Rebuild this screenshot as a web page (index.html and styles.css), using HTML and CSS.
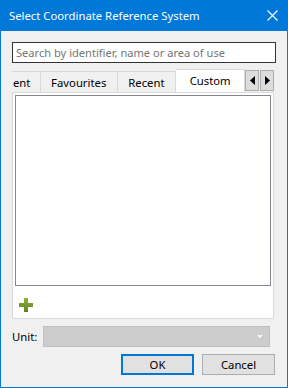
FILE: index.html
```html
<!DOCTYPE html>
<html>
<head>
<meta charset="utf-8">
<link rel="stylesheet" href="styles.css">
</head>
<body>
<div class="window">
  <div class="titlebar">
    <span class="title">Select Coordinate Reference System</span>
    <svg class="close" width="11" height="11" viewBox="0 0 11 11"><path d="M0.5 0.5L10.5 10.5M10.5 0.5L0.5 10.5" stroke="#fff" stroke-width="1.1" fill="none"/></svg>
  </div>
  <div class="content">
    <div class="search"><span class="placeholder">Search by identifier, name or area of use</span></div>
    <div class="tabwidget">
      <div class="tabbar">
        <div class="tab cut"><span>ent</span></div>
        <div class="tab fav">Favourites</div>
        <div class="tab recent">Recent</div>
        <div class="tab active">Custom</div>
        <div class="scrollers">
          <div class="scroll"><svg width="5" height="9" viewBox="0 0 5 9"><path d="M5 0L0 4.5L5 9Z" fill="#000"/></svg></div>
          <div class="scroll"><svg width="5" height="9" viewBox="0 0 5 9"><path d="M0 0L5 4.5L0 9Z" fill="#000"/></svg></div>
        </div>
      </div>
      <div class="pane">
        <div class="list"></div>
        <div class="addrow">
          <svg width="14" height="14" viewBox="0 0 14 14">
            <defs><linearGradient id="g" x1="0" y1="0" x2="0" y2="1"><stop offset="0" stop-color="#93b43f"/><stop offset="1" stop-color="#5d7e1b"/></linearGradient></defs>
            <path d="M5 0H9V5H14V9H9V14H5V9H0V5H5Z" fill="url(#g)"/>
          </svg>
        </div>
      </div>
    </div>
    <div class="unitrow">
      <span class="label">Unit:</span>
      <div class="combo"><svg class="arrow" width="7" height="4" viewBox="0 0 7 4"><path d="M0 0H7L3.5 4Z" fill="#f4f4f4"/><path d="M3.5 4L7 0" stroke="#a8a8a8" stroke-width="0.8"/></svg></div>
    </div>
    <div class="buttons">
      <div class="btn ok">OK</div>
      <div class="btn">Cancel</div>
    </div>
  </div>
</div>
</body>
</html>
```

FILE: styles.css
```css
html, body {
  margin: 0;
  padding: 0;
}
body {
  font-family: "Noto Sans", "Open Sans", sans-serif;
  font-size: 11px;
  color: #000;
}
.window {
  box-sizing: border-box;
  width: 288px;
  height: 388px;
  background: #0078d7;
  padding: 0 1px 1px 1px;
  display: flex;
  flex-direction: column;
}
.titlebar {
  height: 31px;
  flex: none;
  display: flex;
  align-items: center;
  padding-left: 8px;
  padding-right: 9px;
  color: #fff;
  font-size: 11.3px;
}
.title {
  flex: 1;
  margin-top: -1px;
}
.close {
  display: block;
}
.content {
  flex: 1;
  background: #f0f0f0;
  padding: 11px 11px 0 11px;
  display: flex;
  flex-direction: column;
}
.search {
  box-sizing: border-box;
  height: 21px;
  border: 1px solid #333;
  background: #fff;
  display: flex;
  align-items: center;
  padding-left: 3px;
}
.placeholder {
  color: #767676;
  font-size: 11.1px;
  white-space: nowrap;
}
.tabwidget {
  margin-top: 6px;
  margin-right: 2px;
  display: flex;
  flex-direction: column;
}
.tabbar {
  height: 23px;
  display: flex;
  align-items: flex-end;
}
.tab {
  box-sizing: border-box;
  height: 21px;
  background: #f0f0f0;
  border: 1px solid #d9d9d9;
  border-bottom: none;
  border-left: none;
  display: flex;
  align-items: center;
  justify-content: center;
  white-space: nowrap;
  font-size: 11.3px;
}
.tab.cut {
  width: 29px;
  overflow: hidden;
  justify-content: flex-start;
  padding-left: 1px;
}
.tab.fav {
  width: 77px;
}
.tab.recent {
  width: 59px;
}
.tab.active {
  width: 69px;
  height: 24px;
  margin-bottom: -1px;
  background: #fff;
  border-left: none;
  padding-bottom: 2px;
}
.scrollers {
  display: flex;
  gap: 1px;
  align-self: flex-start;
  margin-top: 1px;
}
.scroll {
  box-sizing: border-box;
  width: 14px;
  height: 21px;
  background: #dcdcdc;
  border: 1px solid #adadad;
  display: flex;
  align-items: center;
  justify-content: center;
}
.pane {
  box-sizing: border-box;
  height: 227px;
  background: #fff;
  border: 1px solid #d9d9d9;
  padding: 2px 2px 0 2px;
  display: flex;
  flex-direction: column;
}
.list {
  box-sizing: border-box;
  height: 191px;
  border: 1px solid #828790;
  background: #fff;
}
.addrow {
  padding: 12px 0 0 4px;
}
.addrow svg {
  display: block;
}
.unitrow {
  margin-top: 7px;
  display: flex;
  align-items: center;
  height: 21px;
}
.label {
  width: 31px;
  font-size: 11.3px;
}
.combo {
  box-sizing: border-box;
  width: 227px;
  height: 21px;
  background: #cccccc;
  border: 1px solid #bfbfbf;
  display: flex;
  align-items: center;
  justify-content: flex-end;
  padding-right: 5px;
}
.arrow {
  display: block;
}
.buttons {
  margin-top: 7px;
  display: flex;
  justify-content: flex-end;
  gap: 8px;
  padding-right: 1px;
}
.btn {
  box-sizing: border-box;
  width: 73px;
  height: 21px;
  background: #e1e1e1;
  border: 1px solid #adadad;
  display: flex;
  align-items: center;
  justify-content: center;
  font-size: 11.3px;
}
.btn.ok {
  border: 2px solid #0078d7;
}
```
